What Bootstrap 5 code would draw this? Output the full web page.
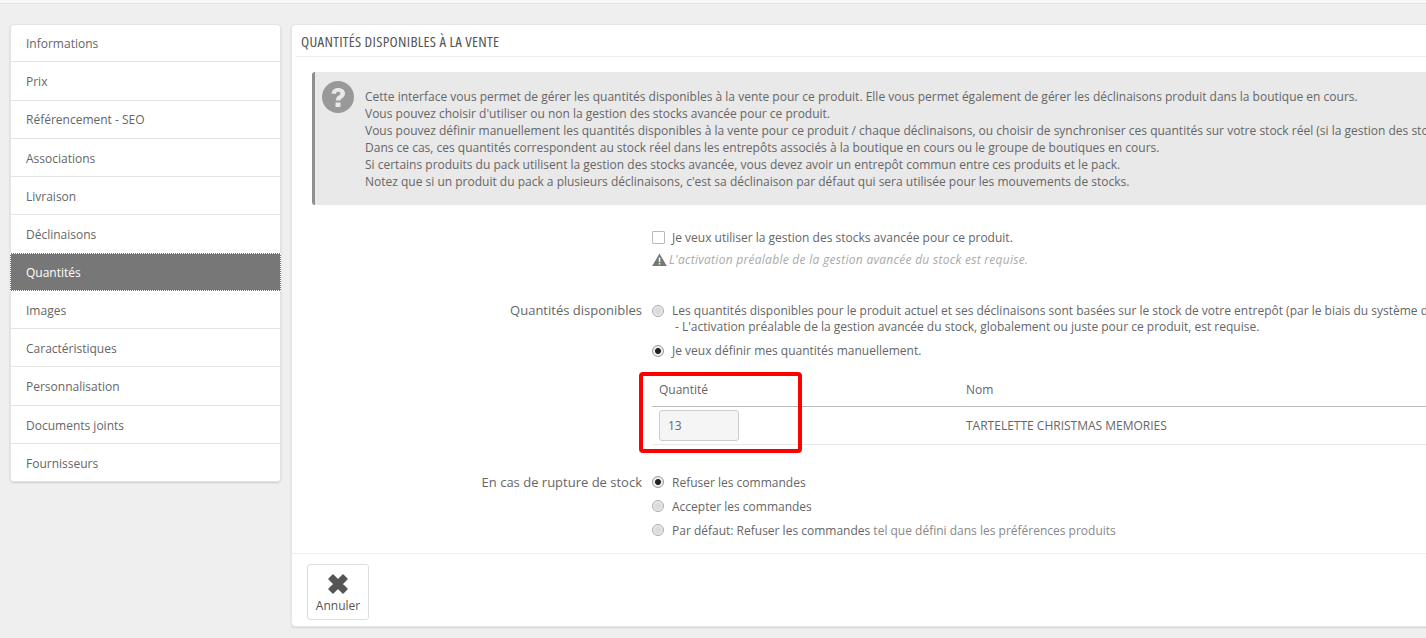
<!DOCTYPE html>
<html lang="fr">
<head>
  <meta charset="UTF-8">
  <meta name="viewport" content="width=device-width, initial-scale=1">
  <title>Quantités</title>
  <link href="https://cdn.jsdelivr.net/npm/bootstrap@5.3.3/dist/css/bootstrap.min.css" rel="stylesheet">
  <style>
    html, body { height: 638px; overflow: hidden; }
    body { background: #efefef; font-family: "Open Sans", "Liberation Sans", sans-serif; font-size: 12px; color: #666; }
    .top-strip { height: 4px; background: #f8f8f8; border-bottom: 1px solid #e2e2e2; }
    .page-wrap { display: flex; gap: 10px; padding: 20px 0 0 10px; width: 1700px; align-items: flex-start; }
    .side-tabs { width: 271px; flex: none; border-radius: 4px; box-shadow: 0 1px 2px rgba(0,0,0,.15); }
    .side-tabs .list-group-item { height: 38.25px; padding: 11px 15px 0; font-size: 12px; line-height: 17px; color: #666; border-color: #e3e3e3; }
    .side-tabs .list-group-item:first-child { padding-top: 10px; }
    .side-tabs .list-group-item:nth-child(3) { padding-top: 10.5px; }
    .side-tabs .list-group-item.active { background: #777; color: #fff; border: 1px dotted #fff; padding-top: 10px; }
    .main-panel { width: 1300px; flex: none; height: 603px; background: #fff; border-radius: 4px; border: 1px solid #e6e6e6; box-shadow: 0 1px 2px rgba(0,0,0,.12); position: relative; }
    .panel-head { margin-left: 4px; height: 32px; border-bottom: 1px solid #eee; padding: 8px 0 0 5px; font-family: "Liberation Sans Narrow", "Open Sans", sans-serif; font-stretch: condensed; font-size: 15px; letter-spacing: .3px; line-height: 17px; color: #555; white-space: nowrap; }
    .help-box { margin: 15px 0 0 20px; height: 133px; background: #e9e9e9; border-left: 3px solid #8f8f8f; border-radius: 3px; padding: 9px 0 0 7px; display: flex; gap: 11px; white-space: nowrap; }
    .help-box svg { flex: none; }
    .help-text { padding-top: 7px; line-height: 17.1px; color: #666; font-size: 12px; }
    .form-line { display: flex; white-space: nowrap; line-height: 17px; }
    .form-lbl { width: 360px; flex: none; text-align: right; padding-right: 10px; font-size: 13px; color: #666; }
    .form-val { flex: 1; }
    .choice { display: flex; align-items: center; gap: 8px; font-size: 12px; }
    .fake-check { width: 13px; height: 13px; margin-right: -1px; background: #fff; border: 1px solid #bbb; flex: none; border-radius: 1px; }
    .fake-radio { width: 12px; height: 12px; border-radius: 50%; flex: none; background: radial-gradient(circle, #dcdcdc 0 3px, #f0f0f0 5px); border: 1px solid #aaa; }
    .fake-radio.on { background: radial-gradient(circle, #222 0 2.5px, #eee 3.5px); border-color: #999; }
    .warn-line { display: flex; align-items: center; gap: 2px; margin-top: 5px; font-style: italic; color: #aaa; font-size: 12px; letter-spacing: .28px; }
    .qty-table { width: 790px; margin: 0; --bs-table-color: #666; font-size: 12px; }
    .qty-table th { font-weight: 400; height: 33px; padding: 0 7px; vertical-align: middle; border-bottom: 1px solid #bbb; color: #666; }
    .qty-table td { height: 38px; padding: 0 7px; vertical-align: middle; border-bottom: 1px solid #e8e8e8; }
    .qty-input { width: 80px; height: 31px; border: 1px solid #ccc; border-radius: 3px; background: #f5f5f5; color: #666; padding: 0 8px; font-size: 12px; box-shadow: none; }
    .panel-foot { position: absolute; left: 0; right: 0; top: 528px; border-top: 1px solid #eee; padding: 10px 15px; }
    .cancel-btn { width: 62px; height: 56px; padding: 8px 0 0; background: #fff; border: 1px solid #ddd; border-radius: 3px; font-size: 12px; color: #555; line-height: 16px; display: flex; flex-direction: column; align-items: center; gap: 3px; }
    .red-frame { position: absolute; left: 347px; top: 347px; width: 163px; height: 81px; border: 4px solid #f00; border-radius: 4px; pointer-events: none; }
    .mt-form-a { margin-top: 24px; }
    .mt-form-b { margin-top: 34px; }
    .mt-radio { margin-top: 7px; }
    .indent-note { padding-left: 23px; font-size: 12px; margin-top: -1px; }
    .table-line { margin-top: 14px; }
    .col-qty { width: 307px; }
    .mt-form-c { margin-top: 29px; }
    .stock-choices { gap: 7px; }
    .text-muted-gray { color: #888; }
  </style>
</head>
<body>
  <script src="https://cdn.jsdelivr.net/npm/bootstrap@5.3.3/dist/js/bootstrap.bundle.min.js"></script>

  <div class="top-strip"></div>
  <div class="page-wrap">
    <div class="list-group side-tabs">
      <a class="list-group-item">Informations</a>
      <a class="list-group-item">Prix</a>
      <a class="list-group-item">Référencement - SEO</a>
      <a class="list-group-item">Associations</a>
      <a class="list-group-item">Livraison</a>
      <a class="list-group-item">Déclinaisons</a>
      <a class="list-group-item active">Quantités</a>
      <a class="list-group-item">Images</a>
      <a class="list-group-item">Caractéristiques</a>
      <a class="list-group-item">Personnalisation</a>
      <a class="list-group-item">Documents joints</a>
      <a class="list-group-item">Fournisseurs</a>
    </div>

    <div class="main-panel">
      <div class="panel-head">QUANTITÉS DISPONIBLES À LA VENTE</div>

      <div class="help-box">
        <svg width="32" height="32" viewBox="0 0 32 32">
          <circle cx="16" cy="16" r="16" fill="#999"/>
          <path d="M9.5 12.5c.6-3.6 3.3-5.5 6.8-5.5 3.800 0 6.700 2.300 6.700 5.500 0 2.600-1.500 3.700-3 4.700-1 .7-1.500 1.100-1.500 2.300h-4.500c0-2.500.8-3.700 2.400-4.800 1.200-.8 2-1.300 2-2.300 0-1-.9-1.700-2.200-1.700-1.400 0-2.200.8-2.500 2.300z" fill="#e9e9e9"/>
          <rect x="13.500" y="21.500" width="5" height="4.500" rx=".5" fill="#e9e9e9"/>
        </svg>
        <div class="help-text">
          Cette interface vous permet de gérer les quantités disponibles à la vente pour ce produit. Elle vous permet également de gérer les déclinaisons produit dans la boutique en cours.<br>
          Vous pouvez choisir d'utiliser ou non la gestion des stocks avancée pour ce produit.<br>
          Vous pouvez définir manuellement les quantités disponibles à la vente pour ce produit / chaque déclinaisons, ou choisir de synchroniser ces quantités sur votre stock réel (si la gestion des stocks avancée est activée).<br>
          Dans ce cas, ces quantités correspondent au stock réel dans les entrepôts associés à la boutique en cours ou le groupe de boutiques en cours.<br>
          Si certains produits du pack utilisent la gestion des stocks avancée, vous devez avoir un entrepôt commun entre ces produits et le pack.<br>
          Notez que si un produit du pack a plusieurs déclinaisons, c'est sa déclinaison par défaut qui sera utilisée pour les mouvements de stocks.
        </div>
      </div>

      <div class="form-line mt-form-a">
        <div class="form-lbl"></div>
        <div class="form-val">
          <div class="choice"><span class="fake-check"></span>Je veux utiliser la gestion des stocks avancée pour ce produit.</div>
          <div class="warn-line">
            <svg width="15" height="13" viewBox="0 0 15 13"><path d="M7.500 0.500 14.800 13H0.200z" fill="#777"/><rect x="6.800" y="4.500" width="1.500" height="4.500" fill="#fff"/><rect x="6.800" y="10" width="1.500" height="1.500" fill="#fff"/></svg>
            L'activation préalable de la gestion avancée du stock est requise.
          </div>
        </div>
      </div>

      <div class="form-line mt-form-b">
        <div class="form-lbl">Quantités disponibles</div>
        <div class="form-val">
          <div class="choice"><span class="fake-radio"></span>Les quantités disponibles pour le produit actuel et ses déclinaisons sont basées sur le stock de votre entrepôt (par le biais du système de gestion des stocks avancée).</div>
          <div class="indent-note">- L'activation préalable de la gestion avancée du stock, globalement ou juste pour ce produit, est requise.</div>
          <div class="choice mt-radio"><span class="fake-radio on"></span>Je veux définir mes quantités manuellement.</div>
        </div>
      </div>

      <div class="form-line table-line">
        <div class="form-lbl"></div>
        <div class="form-val">
          <table class="table qty-table">
            <thead><tr><th class="col-qty">Quantité</th><th>Nom</th></tr></thead>
            <tbody><tr><td><input class="qty-input" type="text" value="13"></td><td>TARTELETTE CHRISTMAS MEMORIES</td></tr></tbody>
          </table>
        </div>
      </div>

      <div class="form-line mt-form-c">
        <div class="form-lbl">En cas de rupture de stock</div>
        <div class="form-val d-flex flex-column stock-choices">
          <div class="choice"><span class="fake-radio on"></span>Refuser les commandes</div>
          <div class="choice"><span class="fake-radio"></span>Accepter les commandes</div>
          <div class="choice"><span class="fake-radio"></span><span>Par défaut: Refuser les commandes <span class="text-muted-gray">tel que défini dans les préférences produits</span></span></div>
        </div>
      </div>

      <div class="panel-foot">
        <button class="cancel-btn" type="button">
          <svg width="22" height="22" viewBox="0 0 22 22"><path d="M6 2 11 7 16 2 20 6 15 11 20 16 16 20 11 15 6 20 2 16 7 11 2 6z" fill="#555" stroke="#555" stroke-width="1.500" stroke-linejoin="round"/></svg>
          Annuler
        </button>
      </div>

      <div class="red-frame"></div>
    </div>
  </div>
</body>
</html>
